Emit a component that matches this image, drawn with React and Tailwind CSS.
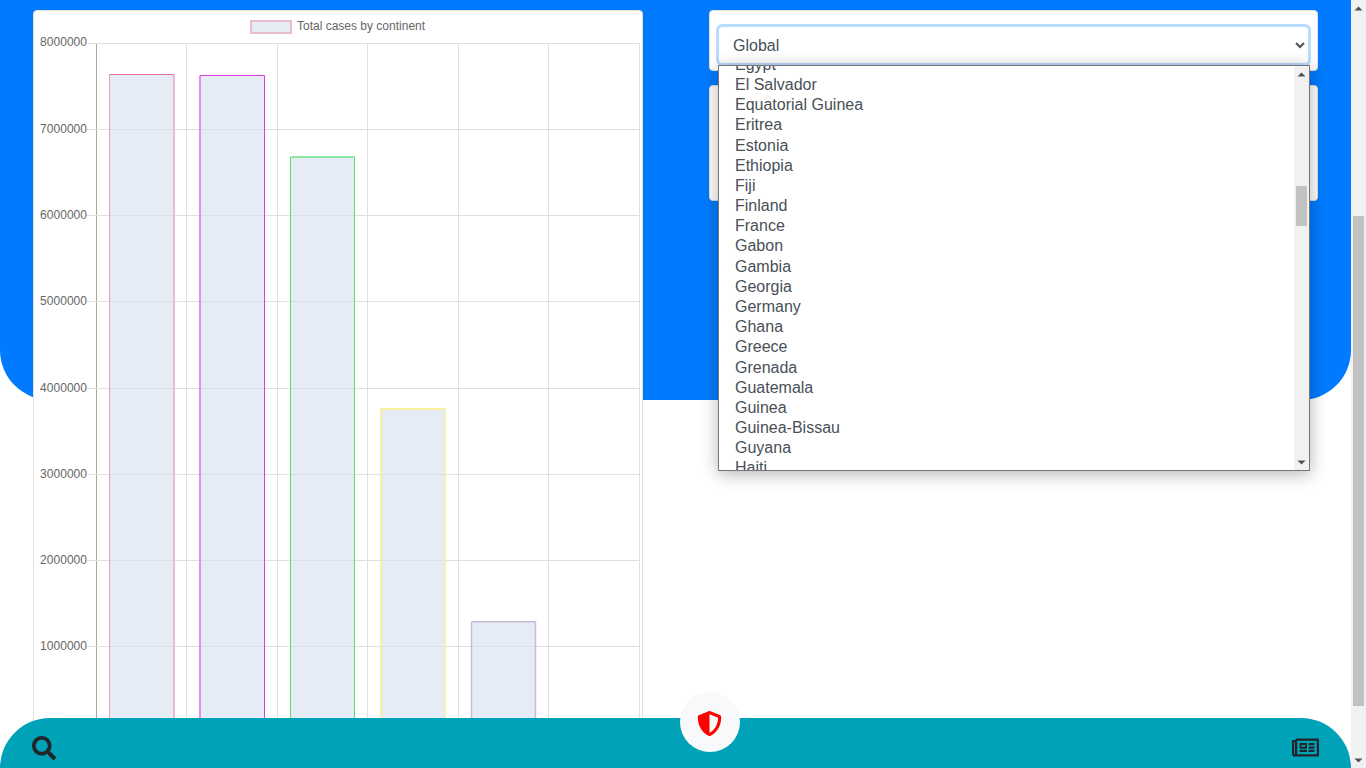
import React from "react";
import { FaSearch, FaRegNewspaper, FaShieldAlt } from "react-icons/fa";

const countries = ["Egypt","El Salvador","Equatorial Guinea","Eritrea","Estonia","Ethiopia","Fiji","Finland","France","Gabon","Gambia","Georgia","Germany","Ghana","Greece","Grenada","Guatemala","Guinea","Guinea-Bissau","Guyana","Haiti"];
const yTicks = [
  { v: 8000000, y: 43.5, ty: 46 },
  { v: 7000000, y: 129.5, ty: 133 },
  { v: 6000000, y: 215.5, ty: 219 },
  { v: 5000000, y: 301.5, ty: 305 },
  { v: 4000000, y: 388.5, ty: 392 },
  { v: 3000000, y: 474.5, ty: 478 },
  { v: 2000000, y: 560.5, ty: 564 },
  { v: 1000000, y: 646.5, ty: 650 },
];
const gridX = [96.5,186.5,277.5,367.5,458.5,548.5,639.5];
const bars = [
  { l: 109.5, lw: 1, r: 174, rw: 2, t: 74.5, tw: 1, lc: "#e8a0c0", rc: "#eeb8d0", tc: "#e070a0" },
  { l: 200, lw: 2, r: 264.5, rw: 1, t: 75.5, tw: 1, lc: "#e88ae8", rc: "#d83cd8", tc: "#d83cd8" },
  { l: 290.5, lw: 1, r: 354.5, rw: 1, t: 157, tw: 1.5, lc: "#55e070", rc: "#55e070", tc: "#70e088" },
  { l: 381, lw: 2, r: 445, rw: 1.5, t: 409, tw: 2, lc: "#f8f0a0", rc: "#f8f0a0", tc: "#f8f0a0" },
  { l: 471.5, lw: 1.5, r: 535.5, rw: 1.5, t: 621.75, tw: 1.5, lc: "#ccb8d4", rc: "#ccb8d4", tc: "#ccb8d4" },
];

function Arrow({ down }) {
  return (
    <svg width="9" height="5" viewBox="0 0 9 5" className="block">
      <path d={down ? "M0.5 0.5H8.5L4.5 4.5Z" : "M0.5 4.5H8.5L4.5 0.5Z"} fill="#505050" />
    </svg>
  );
}

function Chart() {
  return (
    <svg width="610" height="800" className="block -ml-[34px] -mt-[11px]" style={{ overflow: "visible" }} viewBox="0 0 610 800">
      <rect x="251" y="21" width="40" height="12" fill="#e6ecf4" stroke="#e8bccf" strokeWidth="2" />
      <text x="297" y="30" fontSize="12" fill="#666" fontFamily="'Liberation Sans', sans-serif">Total cases by continent</text>
      {gridX.map((x, i) => (
        <line key={x} x1={x} x2={x} y1="43" y2="760" stroke={i === 0 ? "#a8a8a8" : "#e0e0e0"} />
      ))}
      {yTicks.map(({ v, y, ty }) => (
        <g key={v}>
          <line x1="87" x2="640" y1={y} y2={y} stroke="#e0e0e0" />
          <text x="40" y={ty} fontSize="12" fill="#666" textLength="47" fontFamily="'Liberation Sans', sans-serif">{v}</text>
        </g>
      ))}
      {bars.map((b) => (
        <g key={b.l}>
          <rect x={b.l} y={b.t} width={b.r - b.l} height={760 - b.t} fill="#d6e0ee" fillOpacity="0.6" />
          <line x1={b.l} x2={b.l} y1={b.t} y2="760" stroke={b.lc} strokeWidth={b.lw} />
          <line x1={b.r} x2={b.r} y1={b.t} y2="760" stroke={b.rc} strokeWidth={b.rw} />
          <line x1={b.l} x2={b.r} y1={b.t} y2={b.t} stroke={b.tc} strokeWidth={b.tw} />
        </g>
      ))}
    </svg>
  );
}

export default function App() {
  return (
    <div className="flex h-screen overflow-hidden bg-white font-['Liberation_Sans',sans-serif]">
      <main className="relative flex-1 min-w-0 overflow-hidden">
        <header className="h-[400px] bg-[#007bff] rounded-b-[50px] flex items-start pt-[10px] pl-[33px]">
          <section className="w-[610px] h-[800px] shrink-0 bg-white border border-[#dfdfdf] rounded overflow-hidden">
            <Chart />
          </section>
          <div className="ml-[66px] w-[609px] shrink-0 flex flex-col gap-[14px]">
            <div className="relative h-[61px] bg-white border border-[#dfdfdf] rounded pt-[15px] px-[8px]">
              <select
                defaultValue="Global"
                className="block w-[591px] h-[38px] pl-[10px] pr-3 text-base text-[#495057] bg-white border border-[#b8dbff] rounded outline-none shadow-[0_0_0_2px_#b8dbff]"
              >
                <option>Global</option>
              </select>
              <div className="absolute z-10 left-[8px] top-[54px] w-[592px] h-[406px] flex bg-white border border-[#767676] shadow-[0_3px_16px_rgba(0,0,0,0.3)]">
                <ul className="flex-1 min-w-0 overflow-hidden pl-[16px] text-base leading-[20.18px] text-[#495057]">
                  {countries.map((c, i) => (
                    <li key={c} className={i === 0 ? "-mt-[11.07px] h-[20.18px]" : "h-[20.18px]"}>{c}</li>
                  ))}
                </ul>
                <div className="relative w-[15px] shrink-0 bg-[#f1f1f1] flex flex-col items-center">
                  <div className="mt-[6px]"><Arrow /></div>
                  <div className="absolute top-[120px] left-[2px] w-[11px] h-[40px] bg-[#c1c1c1]" />
                  <div className="mt-auto mb-[5px]"><Arrow down /></div>
                </div>
              </div>
            </div>
            <div className="h-[116px] bg-white border border-[#dfdfdf] rounded" />
          </div>
        </header>
        <nav className="absolute left-0 right-0 bottom-0 h-[50px] bg-[#00a2b8] rounded-t-[50px] flex items-center justify-between pl-[32px] pr-[32px] text-[#212529]">
          <FaSearch size={24} className="mt-[9px]" />
          <FaRegNewspaper size={27} className="mt-[9px]" />
        </nav>
        <div className="absolute left-[680px] bottom-[16px] w-[60px] h-[60px] rounded-full bg-[#f8f9fa] flex items-center justify-center">
          <FaShieldAlt size={25} color="#ff0000" className="mt-[3px] -ml-[1px]" />
        </div>
      </main>
      <aside className="relative w-[15px] shrink-0 bg-[#f1f1f1] flex flex-col items-center">
        <div className="mt-[6px]"><Arrow /></div>
        <div className="absolute top-[216px] left-[2px] w-[11px] h-[490px] bg-[#c1c1c1]" />
        <div className="mt-auto mb-[5px]"><Arrow down /></div>
      </aside>
    </div>
  );
}
